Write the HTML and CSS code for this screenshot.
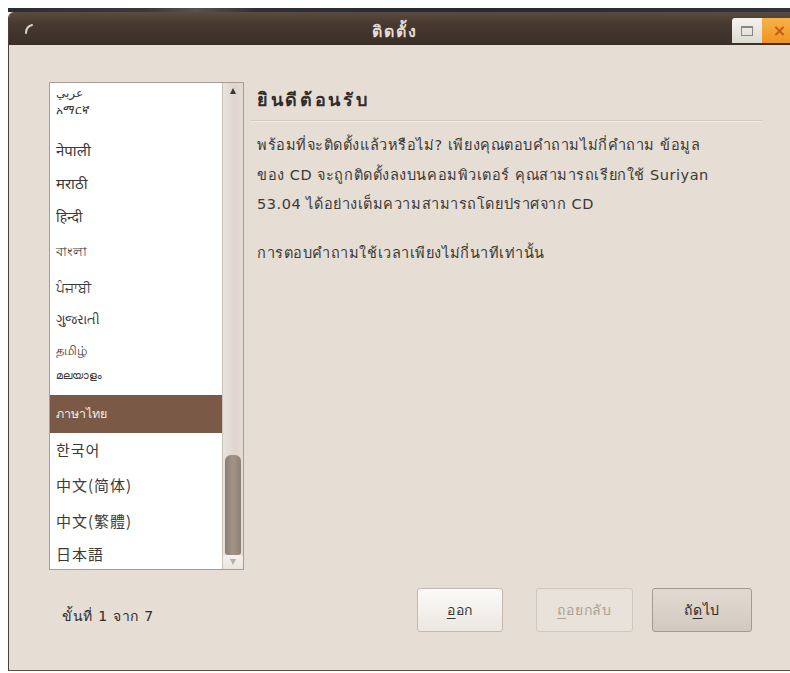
FILE: index.html
```html
<!DOCTYPE html>
<html lang="th">
<head>
<meta charset="utf-8">
<title>ติดตั้ง</title>
<link rel="stylesheet" href="styles.css">
</head>
<body>
<div class="screen">
  <div class="desktop"></div>
  <div class="window">
    <header class="titlebar">
      <svg class="menu-icon" width="12" height="12" viewBox="0 0 12 12">
        <path d="M3 10 C3 6 5 3 9 2" fill="none" stroke="#d8d2c8" stroke-width="2" stroke-linecap="round"/>
      </svg>
      <span class="title">ติดตั้ง</span>
      <div class="wm-buttons">
        <span class="wm-btn wm-max"><span class="max-glyph"></span></span>
        <span class="wm-btn wm-close">×</span>
      </div>
    </header>

    <div class="client">
      <div class="main">
        <div class="langlist">
          <ul class="rows">
            <li class="row h-ar">عربي</li>
            <li class="row h-am">አማርኛ</li>
            <li class="row h-ne">नेपाली</li>
            <li class="row h-mr">मराठी</li>
            <li class="row h-hi">हिन्दी</li>
            <li class="row h-bn">বাংলা</li>
            <li class="row h-pa">ਪੰਜਾਬੀ</li>
            <li class="row h-gu">ગુજરાતી</li>
            <li class="row h-ta">தமிழ்</li>
            <li class="row h-ml">മലയാളം</li>
            <li class="row h-th selected">ภาษาไทย</li>
            <li class="row h-ko">한국어</li>
            <li class="row h-zc">中文(简体)</li>
            <li class="row h-zt">中文(繁體)</li>
            <li class="row h-ja">日本語</li>
          </ul>
          <div class="scrollbar">
            <span class="arrow arrow-up"></span>
            <div class="track"><span class="thumb"></span></div>
            <span class="arrow arrow-down"></span>
          </div>
        </div>

        <section class="welcome">
          <h1 class="heading">ยินดีต้อนรับ</h1>
          <p class="text">พร้อมที่จะติดตั้งแล้วหรือไม่? เพียงคุณตอบคำถามไม่กี่คำถาม ข้อมูล<br>ของ CD จะถูกติดตั้งลงบนคอมพิวเตอร์ คุณสามารถเรียกใช้ Suriyan<br>53.04 ได้อย่างเต็มความสามารถโดยปราศจาก CD</p>
          <p class="text">การตอบคำถามใช้เวลาเพียงไม่กี่นาทีเท่านั้น</p>
        </section>
      </div>

      <footer class="footer">
        <span class="step">ขั้นที่ 1 จาก 7</span>
        <div class="actions">
          <button class="btn btn-quit"><u>อ</u>อก</button>
          <button class="btn btn-back" disabled><u>ถ</u>อยกลับ</button>
          <button class="btn btn-next">ถั<u>ด</u>ไป</button>
        </div>
      </footer>
    </div>
  </div>
</div>
</body>
</html>
```

FILE: styles.css
```css
html, body {
  background: #ffffff;
}

body {
  margin: 8px 0 0 8px;
  font-family: "DejaVu Sans", "Noto Sans", "Noto Sans CJK SC", sans-serif;
  color: #3a3632;
}

.screen {
  width: 782px;
  height: 665px;
  overflow: hidden;
}

/* strip of desktop wallpaper above the window */
.desktop {
  height: 4px;
  background: linear-gradient(90deg, #2a2d33 0%, #3a3a3c 18%, #55534f 24%, #2e3036 32%, #262930 60%, #30343a 100%);
}

.window {
  width: 800px;
  height: 659px;
  border-left: 1px solid #4b4038;
  border-top-left-radius: 6px;
  overflow: hidden;
  display: flex;
  flex-direction: column;
}

.titlebar {
  height: 33px;
  flex: none;
  display: flex;
  align-items: center;
  background: linear-gradient(#5b4b3f 0%, #45382f 40%, #3a2f28 100%);
  position: relative;
}

.menu-icon {
  margin-left: 14px;
}

.title {
  position: absolute;
  left: 0;
  right: 28px;
  text-align: center;
  color: #e2ddd5;
  font-weight: bold;
  font-size: 16px;
  letter-spacing: 2px;
  top: 7px;
}

.wm-buttons {
  margin-left: auto;
  display: flex;
  align-self: flex-end;
  margin-bottom: 2px;
  margin-right: 12px;
}

.wm-btn {
  width: 30px;
  height: 25px;
  display: flex;
  align-items: center;
  justify-content: center;
}

.wm-max {
  background: linear-gradient(#f4f2ee, #dedad4);
  border-top-left-radius: 3px;
}

.max-glyph {
  width: 10px;
  height: 7px;
  border: 1px solid #8a8580;
  border-top-width: 2px;
}

.wm-close {
  background: linear-gradient(#f7b24a, #ee9422);
  color: #c25c0c;
  font-weight: bold;
  font-size: 16px;
  line-height: 1;
  width: 35px;
}

.client {
  flex: 1;
  background: #e6ddd4;
  border-bottom: 1px solid #5a5048;
  padding: 37px 0 0 40px;
  display: flex;
  flex-direction: column;
}

.main {
  display: flex;
}

/* language list with its scrollbar */
.langlist {
  width: 193px;
  height: 486px;
  border: 1px solid #a89d94;
  background: #ffffff;
  display: flex;
  flex: none;
}

.rows {
  list-style: none;
  margin: 0;
  padding: 0;
  flex: 1;
  overflow: hidden;
}

.row {
  display: flex;
  align-items: center;
  padding-left: 6px;
  font-size: 13px;
  color: #3c3a37;
  font-family: "DejaVu Sans", "Noto Sans", sans-serif;
  box-sizing: border-box;
}

.h-ar { height: 19px; font-size: 12px; }
.h-am { height: 32px; font-size: 12px; align-items: flex-start; padding-top: 1px; }
.h-ne { height: 32px; font-size: 15px; }
.h-mr { height: 34px; font-size: 15px; }
.h-hi { height: 33px; font-size: 14px; }
.h-bn { height: 39px; }
.h-pa { height: 32px; font-size: 14px; }
.h-gu { height: 32px; font-size: 12.5px; }
.h-ta { height: 30px; }
.h-ml { height: 29px; font-size: 11px; padding-bottom: 10px; }
.h-th { height: 38px; font-size: 12.5px; }
.h-ko { height: 33px; font-size: 15px; font-family: "Noto Sans CJK KR", sans-serif; letter-spacing: 1px; }
.h-zc { height: 36px; font-size: 15px; font-family: "Noto Sans CJK SC", sans-serif; letter-spacing: 1px; }
.h-zt { height: 37px; font-size: 15px; font-family: "Noto Sans CJK TC", sans-serif; letter-spacing: 1px; }
.h-ja { height: 29px; font-size: 15px; font-family: "Noto Sans CJK JP", sans-serif; letter-spacing: 1px; }

.row.selected {
  background: #7a5a46;
  color: #f1ebe5;
}

.scrollbar {
  width: 20px;
  flex: none;
  border-left: 1px solid #c9c0b8;
  background: linear-gradient(90deg, #e9e3dd, #ddd5ce 60%, #e4ddd6);
  display: flex;
  flex-direction: column;
}

.arrow {
  height: 14px;
  flex: none;
  position: relative;
}

.arrow-up::after,
.arrow-down::after {
  content: "";
  position: absolute;
  left: 7px;
  width: 0;
  height: 0;
  border-left: 3.5px solid transparent;
  border-right: 3.5px solid transparent;
}

.arrow-up::after {
  top: 5px;
  border-bottom: 6px solid #3a3632;
}

.arrow-down {
  background: linear-gradient(#f5f2ef, #e9e4df);
  border-radius: 3px;
}

.arrow-down::after {
  top: 4px;
  border-top: 6px solid #b5ada6;
}

.track {
  flex: 1;
  display: flex;
  flex-direction: column;
  justify-content: flex-end;
  padding: 0 2px 0 2px;
}

.thumb {
  height: 100px;
  border-radius: 6px 6px 3px 3px;
  background: linear-gradient(90deg, #8e7f74, #a39489 50%, #8f8075);
}

/* welcome text on the right */
.welcome {
  margin-left: 6px;
  width: 512px;
  flex: none;
}

.heading {
  margin: 7px 0 0 0;
  padding: 0 0 9px 7px;
  font-size: 18px;
  letter-spacing: 2.7px;
  font-weight: bold;
  color: #2f2c29;
  border-bottom: 1px solid #d2c9c0;
  box-shadow: 0 1px 0 #f1ece6;
  line-height: 22px;
}

.text {
  margin: 10px 0 0 7px;
  font-size: 14.5px;
  letter-spacing: 0.55px;
  line-height: 29.5px;
  color: #3c3936;
  white-space: nowrap;
}

.text + .text {
  margin-top: 19px;
}

/* bottom row: step counter and actions */
.footer {
  display: flex;
  align-items: center;
  justify-content: space-between;
  width: 713px;
  margin-top: 18px;
  height: 44px;
}

.step {
  padding-left: 13px;
  margin-top: 12px;
  font-size: 14px;
  letter-spacing: 0.7px;
  color: #2f2c29;
}

.actions {
  margin-right: 10px;
  display: flex;
}

.btn {
  height: 44px;
  font-family: inherit;
  font-size: 14px;
  letter-spacing: 0.8px;
  border-radius: 3px;
  padding: 0;
}

.btn u {
  text-underline-offset: 3px;
}

.btn-quit {
  width: 86px;
  border: 1px solid #c2b8ae;
  background: linear-gradient(#fbfaf8, #ece7e1);
  color: #3a3632;
}

.btn-back {
  width: 97px;
  margin-left: 33px;
  border: 1px solid #d0c7be;
  background: #e9e2da;
  color: #aaa097;
}

.btn-next {
  width: 100px;
  margin-left: 19px;
  border: 1px solid #a69a90;
  background: linear-gradient(#e2dad2, #d3c9c0);
  color: #2f2c29;
}
```
